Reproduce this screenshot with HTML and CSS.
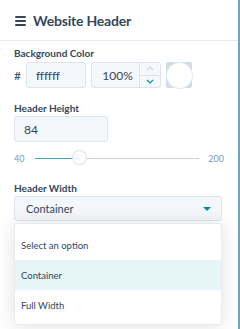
FILE: index.html
```html
<!DOCTYPE html>
<html>
<head>
<meta charset="utf-8">
<link rel="stylesheet" href="styles.css">
</head>
<body>
<div class="panel">
  <header class="top">
    <svg class="burger" width="11" height="10" viewBox="0 0 11 10"><rect x="0" y="0" width="11" height="2" rx="1"/><rect x="0" y="4" width="11" height="2" rx="1"/><rect x="0" y="8" width="11" height="2" rx="1"/></svg>
    <h1 class="title">Website Header</h1>
  </header>

  <div class="label first">Background Color</div>
  <div class="color-row">
    <span class="hash">#</span>
    <div class="box hex">ffffff</div>
    <div class="box pct">
      <span class="pct-val">100%</span>
      <div class="stepper">
        <div class="step up"><svg width="8" height="5" viewBox="0 0 8 5"><path d="M1 4L4 1L7 4" fill="none" stroke="#cbd6e2" stroke-width="1.2"/></svg></div>
        <div class="step down"><svg width="8" height="5" viewBox="0 0 8 5"><path d="M1 1L4 4L7 1" fill="none" stroke="#0091ae" stroke-width="1.2"/></svg></div>
      </div>
    </div>
    <div class="swatch"><div class="swatch-circle"></div></div>
  </div>

  <div class="label second">Header Height</div>
  <div class="box height">84</div>
  <div class="slider-row">
    <span class="tick">40</span>
    <div class="track"><div class="fill"></div><div class="thumb"></div></div>
    <span class="tick">200</span>
  </div>

  <div class="label third">Header Width</div>
  <div class="select-wrap">
    <div class="box select">
      <span>Container</span>
      <svg width="8" height="4" viewBox="0 0 8 4"><path d="M0 0H8L4 4Z" fill="#0091ae"/></svg>
    </div>
    <ul class="menu">
      <li>Select an option</li>
      <li class="active">Container</li>
      <li>Full Width</li>
    </ul>
  </div>
</div>
</body>
</html>
```
FILE: styles.css
```css
html, body { margin: 0; padding: 0; background: #fff; }
body { font-family: "Lato", "Noto Sans", sans-serif; color: #33475b; }
.panel {
  width: 240px; height: 329px; box-sizing: border-box;
  border-right: 2px solid #6ba8bc; overflow: hidden;
}
.top {
  height: 40px; display: flex; align-items: center; gap: 7px;
  padding-left: 15px; border-bottom: 1px solid #e6ebf1;
}
.burger { fill: #33475b; margin-top: 1px; }
.title { margin: 0; font-size: 14px; font-weight: 700; color: #33475b; letter-spacing: -0.2px; }
.label { font-size: 10px; font-weight: 700; line-height: 14px; margin-left: 14px; }
.label.first { margin-top: 5px; }
.label.second { margin-top: 13px; }
.label.third { margin-top: 16px; }
.box {
  box-sizing: border-box; background: #f5f8fa; border: 1px solid #dfe3eb;
  border-radius: 3px; font-size: 12px; color: #33475b;
}
.color-row { display: flex; align-items: center; margin: 2px 0 0 14px; height: 26px; }
.hash { font-size: 12px; width: 12px; color: #33475b; }
.hex { width: 60px; height: 26px; display: flex; align-items: center; padding-left: 9px; }
.pct { width: 70px; height: 26px; margin-left: 5px; display: flex; align-items: stretch; }
.pct-val { flex: 1; display: flex; align-items: center; justify-content: center; padding-left: 4px; }
.stepper { width: 20px; border-left: 1px solid #dfe3eb; display: flex; flex-direction: column; }
.step { flex: 1; display: flex; align-items: center; justify-content: center; }
.step.up { border-bottom: 1px solid #dfe3eb; }
.swatch {
  width: 26px; height: 26px; margin-left: 5px; background: #d2dce6; border-radius: 2px;
  display: flex; align-items: center; justify-content: center;
}
.swatch-circle { width: 25px; height: 25px; border-radius: 50%; background: #fff; box-shadow: 0 0 0 1px #e3e8ee; }
.height { width: 94px; height: 26px; margin: 1px 0 0 14px; display: flex; align-items: center; padding-left: 9px; }
.slider-row { display: flex; align-items: center; height: 14px; margin: 9px 0 0 14px; width: 210px; }
.tick { font-size: 9px; color: #7c98b6; }
.track { position: relative; height: 1px; background: #cbd6e2; margin: 0 9px 0 11px; flex: 1; }
.fill { height: 1px; width: 39px; background: #3da9c0; }
.thumb {
  position: absolute; left: 38px; top: -7px; width: 13px; height: 13px; border-radius: 50%;
  background: #fff; box-shadow: 0 0 0 1px #dfe3eb, 0 1px 2px rgba(0,0,0,0.08);
}
.select-wrap { position: relative; margin: 1px 0 0 14px; width: 208px; }
.select {
  height: 25px; display: flex; align-items: center; justify-content: space-between;
  padding: 0 10px 0 11px; font-size: 11px;
}
.menu {
  position: absolute; left: 0; top: 27px; width: 208px; height: 102px; box-sizing: border-box;
  margin: 0; padding: 6px 0; list-style: none; background: #fff; border-radius: 3px;
  border: 1px solid #e6ebf1; box-shadow: 0 1px 20px rgba(0,0,0,0.12);
}
.menu li { height: 30px; display: flex; align-items: center; padding-left: 6px; font-size: 9.5px; color: #33475b; }
.menu li.active { background: #e5f5f8; }
```
